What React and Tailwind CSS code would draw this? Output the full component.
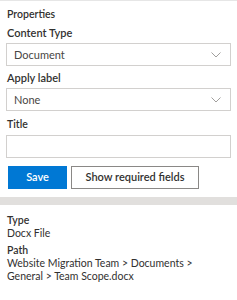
import React from "react";

function Chevron() {
  return (
    <svg width="10" height="6" viewBox="0 0 10 6" fill="none">
      <path d="M0.5 0.5 L5 5 L9.5 0.5" stroke="#a19f9d" strokeWidth="1" />
    </svg>
  );
}

function Dropdown({ value }) {
  return (
    <div className="flex items-center justify-between h-[23px] border border-[#d2d0ce] pl-[7px] pr-[9px]">
      <span className="text-[11px] leading-[14px] text-[#484644]">{value}</span>
      <Chevron />
    </div>
  );
}

export default function App() {
  return (
    <div
      className="w-[237px] h-[300px] bg-white border-t border-[#e6e6e6] text-[#323130] overflow-hidden"
      style={{ fontFamily: 'Lato, "Open Sans", sans-serif' }}
    >
      <div className="px-[6px] pt-[6px]">
        <div className="pl-[1px] text-[10.5px] font-semibold leading-[14px]">Properties</div>
        <div className="pl-[1px] mt-[4px] text-[11px] font-semibold leading-[16px]">Content Type</div>
        <div className="mt-[2px]">
          <Dropdown value="Document" />
        </div>
        <div className="pl-[1px] mt-[4px] text-[11px] font-semibold leading-[16px]">Apply label</div>
        <div className="mt-[2px]">
          <Dropdown value="None" />
        </div>
        <div className="pl-[1px] mt-[5px] text-[10.5px] font-semibold leading-[16px]">Title</div>
        <div className="mt-[3px] h-[23px] border border-[#d2d0ce]"></div>
        <div className="flex gap-[4px] mt-[8px] pl-[2px]">
          <button className="h-[23px] w-[59px] bg-[#0078d4] text-white text-[11px] font-semibold">Save</button>
          <button className="h-[23px] w-[128px] border border-[#8a8886] bg-white text-[11px] font-semibold text-[#323130]">
            Show required fields
          </button>
        </div>
      </div>
      <div className="mt-[8px] h-[8px] bg-[#e1dfdd]"></div>
      <div className="px-[7px] pt-[9px] text-[10.5px] leading-[13px]">
        <div className="font-semibold">Type</div>
        <div>Docx File</div>
        <div className="mt-[4px] font-semibold">Path</div>
        <div>
          Website Migration Team &gt; Documents &gt;
          <br />
          General &gt; Team Scope.docx
        </div>
      </div>
    </div>
  );
}
